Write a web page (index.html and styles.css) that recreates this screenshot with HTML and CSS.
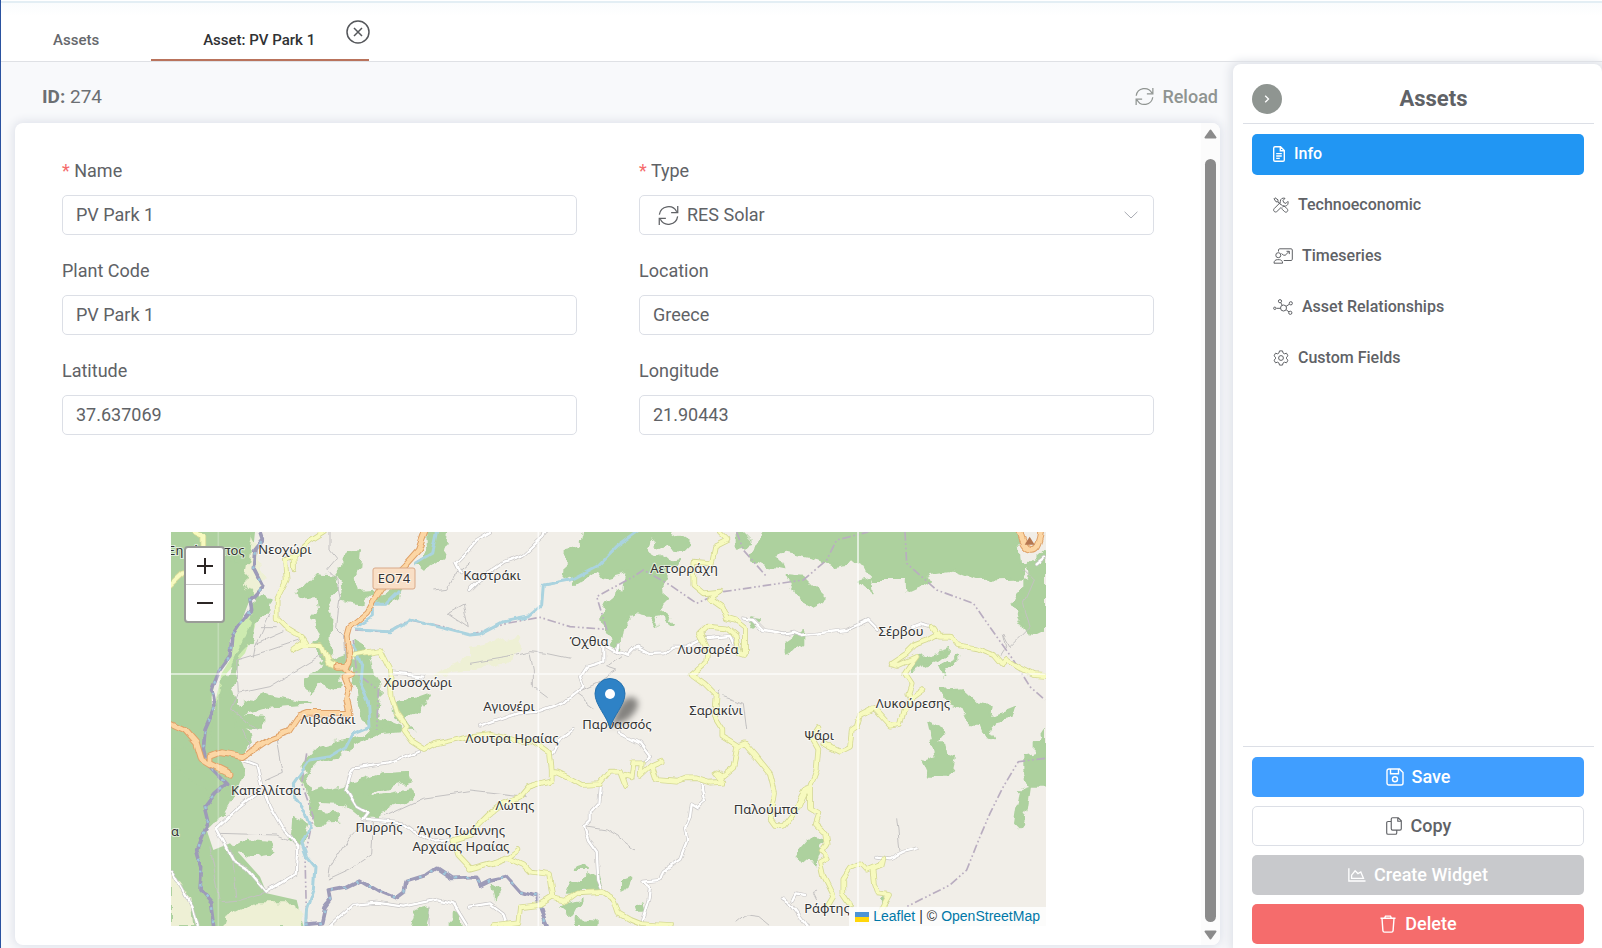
FILE: index.html
```html
<!DOCTYPE html>
<html lang="en">
<head>
<meta charset="utf-8">
<title>Asset: PV Park 1</title>
<link rel="stylesheet" href="styles.css">
</head>
<body>
<svg class="sprite" aria-hidden="true">
  <symbol id="i-refresh" viewBox="0 0 20 20"><path d="M1.300 9.200A8.800 8.800 0 0 1 17.800 6.400M18.800 1v6.200h-6.300M18.700 10.800A8.800 8.800 0 0 1 2.200 13.600M1.200 19v-6.200h6.300"/></symbol>
  <symbol id="i-file" viewBox="0 0 12 16"><path d="M7.500.8H2A1.300 1.300 0 0 0 .7 2v12A1.300 1.300 0 0 0 2 15.300h8a1.300 1.300 0 0 0 1.300-1.300V4.600zM7.300.8v4h4M3.200 7.600h5.600M3.200 10h5.600M3.200 12.400h3.600"/></symbol>
  <symbol id="i-tools" viewBox="0 0 16 16"><path d="M1 1.800 2 .8l3 2v1.700l3.200 3.200M1 1.800l2 3h1.700l3 3M9 10.400c-.4.8-.2 1.500.4 2.100l2 2c.9.9 2 .9 2.800.1s.8-1.900-.1-2.800l-2-2c-.6-.6-1.300-.8-2.100-.5L8.200 7.700M10 8.500l.9.6c1.800.4 4.200-.7 4.300-3.400 0-.5-.1-.9-.3-1.300l-2 2-2.200-.9-.7-2 2-2.200C9.400.5 7.300 2.100 7.300 4.200c0 .5 0 .8.1 1.200L1.200 11.600c-.8.9-.8 2 0 2.800s2 .8 2.800 0L8 10.500"/></symbol>
  <symbol id="i-present" viewBox="0 0 20 16"><path d="M5.500 3.500V2c0-.7.5-1.200 1.200-1.200h11.400c.7 0 1.200.5 1.200 1.200v9.300c0 .7-.5 1.200-1.200 1.200h-7.300M1 15.200h8.600c0-2.300-1.500-3.500-3.300-3.500h-2C2.500 11.700.9 12.900 1 15.200zM8.500 5.500l1.700 1.500 2 .3 4-4M13.500 3.300h2.800v2.800"/><circle cx="5.300" cy="7.200" r="2.500"/></symbol>
  <symbol id="i-nodes" viewBox="0 0 20 16"><circle cx="10.500" cy="9" r="3"/><circle cx="7" cy="2.200" r="1.600"/><circle cx="17.800" cy="4.300" r="1.600"/><circle cx="17.300" cy="13.800" r="1.600"/><circle cx="1.800" cy="9.300" r="1.200"/><path d="m7.800 3.700 1.400 2.600M16.400 5.200 13 7.400M16 12.900l-2.800-2.100M3.500 9.300h3.800"/></symbol>
  <symbol id="i-gear" viewBox="0 0 16 16"><path d="M6.500.9h3l.5 2 1.500.9 2-.6L15 5.800l-1.500 1.400v1.600l1.500 1.400-1.500 2.600-2-.6-1.500.9-.5 2h-3l-.5-2-1.500-.9-2 .6L1 10.200l1.500-1.400V7.200L1 5.800l1.500-2.600 2 .6 1.500-.9z"/><circle cx="8" cy="8" r="2.400"/></symbol>
  <symbol id="i-save" viewBox="0 0 18 18"><path d="M3 1h10.500L17 4.500V15a2 2 0 0 1-2 2H3a2 2 0 0 1-2-2V3a2 2 0 0 1 2-2zM4.500 1v4.800h8V1"/><circle cx="9" cy="11.300" r="2.500"/></symbol>
  <symbol id="i-copy" viewBox="0 0 17 19"><path d="M7 .8h6l3.200 3.200v8.500c0 .8-.6 1.400-1.400 1.400H7c-.8 0-1.400-.6-1.400-1.400V2.200C5.600 1.400 6.200.8 7 .8zM12.500.8v3.700h3.700M5.600 4.800H2.200c-.8 0-1.400.6-1.400 1.400v10.600c0 .8.6 1.400 1.400 1.400H10c.8 0 1.400-.6 1.400-1.400v-2.900"/></symbol>
  <symbol id="i-chart" viewBox="0 0 19 16"><path d="M.9 1v13.300H18.500M3.800 11.500V8.200L7.500 3.500l3 3 3-1.700 2.800 6.700z"/></symbol>
  <symbol id="i-trash" viewBox="0 0 16 18"><path d="M.5 3.200h15M4.600 3l.9-1.900h5l.9 1.900M2 3.200l.9 12.400c.1.900.7 1.500 1.600 1.500h7c.9 0 1.500-.6 1.600-1.500L14 3.200"/></symbol>
</svg>

<header class="tabs">
  <a class="tab" href="#assets">Assets</a>
  <a class="tab tab-active" href="#asset" aria-current="page">Asset: PV Park 1</a>
  <button class="tab-close" aria-label="Close tab"><svg viewBox="0 0 24 24"><circle cx="12" cy="12" r="11"/><path d="m8 8 8 8M16 8l-8 8"/></svg></button>
</header>

<div class="workspace">
  <main class="main">
    <div class="bar">
      <div class="asset-id"><b>ID:</b> 274</div>
      <button class="reload"><svg class="icon"><use href="#i-refresh"/></svg>Reload</button>
    </div>
    <section class="card">
      <div class="scroll-body">
        <form class="form">
          <div class="field"><label for="name"><span class="req">*</span> Name</label><input id="name" value="PV Park 1"></div>
          <div class="field"><label for="type"><span class="req">*</span> Type</label>
            <div class="select-box">
              <svg class="type-icon"><use href="#i-refresh"/></svg>
              <select id="type"><option>RES Solar</option></select>
              <svg class="chevron" viewBox="0 0 14 8"><path d="m.6.8 6.400 6.200L13.400.8"/></svg>
            </div>
          </div>
          <div class="field"><label for="code">Plant Code</label><input id="code" value="PV Park 1"></div>
          <div class="field"><label for="loc">Location</label><input id="loc" value="Greece"></div>
          <div class="field"><label for="lat">Latitude</label><input id="lat" value="37.637069"></div>
          <div class="field"><label for="lon">Longitude</label><input id="lon" value="21.90443"></div>
        </form>
        <div class="map">
          <svg class="map-canvas" viewBox="0 0 875 394" preserveAspectRatio="xMidYMid slice">
            <defs>
              <filter id="scrub" x="0" y="0" width="1" height="1" color-interpolation-filters="sRGB">
                <feTurbulence type="fractalNoise" baseFrequency="0.03" numOctaves="3" seed="4"/>
                <feColorMatrix values="0 0 0 0 0.84  0 0 0 0 0.92  0 0 0 0 0.72  16 0 0 0 -8.6"/>
                <feComposite operator="in" in2="SourceAlpha"/>
              </filter>
              <filter id="scrub2" x="0" y="0" width="1" height="1" color-interpolation-filters="sRGB">
                <feTurbulence type="fractalNoise" baseFrequency="0.014" numOctaves="4" seed="11"/>
                <feColorMatrix values="0 0 0 0 0.65  0 0 0 0 0.87  0 0 0 0 0.59  0 16 0 0 -7"/>
                <feComposite operator="in" in2="SourceAlpha"/>
              </filter>
              <filter id="rough" filterUnits="userSpaceOnUse" x="0" y="0" width="2640" height="1200">
                <feTurbulence type="fractalNoise" baseFrequency="0.03" numOctaves="2" seed="3" result="n"/>
                <feDisplacementMap in="SourceGraphic" in2="n" scale="36" xChannelSelector="R" yChannelSelector="G"/>
              </filter>
              <filter id="wobble" filterUnits="userSpaceOnUse" x="0" y="0" width="2640" height="1200">
                <feTurbulence type="fractalNoise" baseFrequency="0.025" numOctaves="1" seed="7" result="n"/>
                <feDisplacementMap in="SourceGraphic" in2="n" scale="22" xChannelSelector="R" yChannelSelector="G"/>
              </filter>
              <filter id="shade" x="-.5" y="-.5" width="2" height="2"><feGaussianBlur stdDeviation="3"/></filter>
              <path id="west" d="M3 6H255L245 100 270 170 235 220 210 285 180 330 172 400 140 435 125 500 128 600 180 610 225 720 200 780 150 860 110 900 130 960 180 940 270 1040 290 1090 380 1110 400 1188H3z"/>
              <g id="major">
                <path d="M765 6 745 60 705 105 640 170 610 215 590 250 540 290 532 320 538 390 530 412 500 412M530 420 545 432 525 440 540 475 530 510 540 550 410 550 385 560 355 605 300 625 220 680 150 668 120 680 120 700 180 730M3 580 45 600 80 640 95 690 120 705"/>
                <path d="M2550 6Q2560 55 2582 58T2612 6"/>
              </g>
              <g id="minor">
                <path d="M465 6 420 35 370 80 345 90 350 150 320 210 320 265 345 290 395 320 405 335 370 360 400 345 455 345 475 400 500 412M370 80 372 115M540 375 630 360 660 420 665 500 680 550 710 590 700 600 725 635 765 660 800 640 890 620 960 612M70 6 100 20 100 50M3 165 40 130"/>
                <path d="M960 612 1000 620 1030 630 1090 635 1140 670 1145 720 1145 750 1075 770 1050 800 1000 820 960 850 900 910M1145 725 1165 728 1200 745 1235 765 1290 762 1320 725 1350 725 1365 765 1355 735 1385 745 1390 700 1415 700 1412 735 1445 705 1475 692 1445 705 1460 750 1520 755 1545 745 1580 745 1620 758 1660 755 1640 730 1655 740 1690 710 1702 650 1725 640 1760 680 1800 730 1815 790 1802 870 1815 888 1840 888 1870 850 1910 775"/>
                <path d="M1650 6 1675 30 1635 50 1625 100 1570 95 1570 165 1600 190 1650 185 1620 205 1655 230 1670 265 1700 275 1725 295 1725 375 1710 370 1700 320 1670 295 1610 290 1590 310 1610 350 1605 400 1565 435 1600 460 1640 500 1635 560 1660 600 1660 620 1700 645"/>
                <path d="M1045 960 1010 985 1015 980 960 1005 1000 990M900 1016 960 1000 1010 983 1060 1005 1080 1025 1140 1032 1150 1100 1110 1125 1050 1132 1045 1180 970 1188M1150 1105 1190 1112 1220 1090 1300 1086 1330 1105 1345 1150 1380 1170 1410 1182 1500 1188M850 930 865 975 900 1012M900 915 850 930"/>
                <path d="M2285 290 2305 320 2340 320 2360 345 2420 355 2470 375 2495 405 2510 390 2550 415 2590 435 2625 438M2305 312 2270 332 2235 345 2210 370 2165 400 2185 405 2240 380 2225 400 2205 430 2225 460 2215 490 2225 505 2260 480M2225 500 2200 545 2190 585 2160 590 2110 535 2070 555 2060 590 2045 600 2040 650 2010 665 1960 640M1945 590 1925 620 1945 655 1940 720 1920 770 1920 835 1945 850 1935 880 1965 910 1970 940 1955 960 1970 985 1950 995 1960 1040 1990 1100 1975 1125M1915 775 1890 830M2040 1120 2020 1090 2020 1045 2040 1015 2070 1000 2090 1022 2130 1005 2140 985 2135 1010 2110 1020 2115 1060 2125 1090 2160 1095 2130 1150"/>
              </g>
              <g id="local">
                <path d="M1125 6 1120 20 1060 75 1000 95 950 130 900 180M960 6 920 30 900 55M900 60 860 100 875 130M1345 345 1340 365 1375 375 1400 350 1440 372 1485 370 1510 350 1550 350 1600 325 1680 318 1690 340M1345 370 1300 345 1300 395 1250 410 1230 440 1240 470 1180 520 1110 545 1045 550 930 590M670 430 760 440"/>
                <path d="M1720 265 1750 270 1780 300 1840 310 1870 305 1900 315 2030 300 2095 270 2125 300M2230 290 2255 280 2285 290M2625 80 2600 100M1290 762 1285 820 1262 845 1262 870 1242 890 1255 930 1280 965 1285 1050 1300 1085M1595 762 1600 800 1605 815 1585 832 1565 820 1560 860 1545 895 1552 930 1530 985 1480 1020 1470 1050 1420 1055 1440 1070 1435 1110 1415 1175M1415 700 1440 680 1410 640 1350 610M1150 670 1170 630 1210 600"/>
                <path d="M220 690 260 705 275 770 300 830 335 890 385 950 380 1030 290 1085 230 1015 190 990 140 895 210 830 260 790M750 665 660 700 550 715 530 780 560 830 595 850 580 870M590 870 700 880 740 910 790 935 850 930M480 1188 550 1125 620 1118 700 1130 800 1108 850 1120 890 1185M3 1020 45 1095 65 1130 80 1188M900 1130 960 1120 1000 1150 1010 1185M2115 980 2160 985 2200 965 2240 955M1910 1188 1860 1120 1835 1105M1870 1110 1880 1090 1905 1095"/>
              </g>
              <g id="rivers">
                <path d="M270 0 280 30 255 60 250 115 278 170 240 210 245 240 205 290 185 320 180 380 145 430 125 480 135 530 105 600 100 660 110 700 170 760 135 790 105 830 115 870 80 960 95 1010 90 1080 125 1120 135 1195"/>
                <path d="M405 1180 455 1175 465 1130 480 1110 475 1080 530 1070 570 1050 630 1085 680 1105 700 1090 705 1055 770 1035 800 1015 845 1045 920 1042 930 1065 960 1050 1010 1040 1050 1085 1100 1100 1115 1145 1135 1195"/>
              </g>
            </defs>
            <g transform="translate(-1 -2) scale(.333333)">
              <path class="land" d="M0 0h2640v1200H0z"/>
              <use href="#west" class="scrub-base"/>
              <g class="pale" filter="url(#rough)">
                <path d="M245 10 270 90 280 170 255 200 225 160 235 100zM400 1188 380 1120 260 1120 170 1160 160 1188zM3 1020 60 1100 70 1188H3zM900 350 1040 320 1060 355 1000 400 900 420zM830 410 900 385V425L780 440z"/>
              </g>
              <path class="meadow" d="M262 215 215 275 185 320 180 390 155 430 135 520 135 560 170 430 225 370 255 290z"/>
              <g class="wood" filter="url(#rough)">
                <path d="M260 200 305 210 290 250 250 280 245 330 210 370 185 470 195 500 195 560 230 600 240 640 200 680 130 690 110 650 125 580 160 460 200 380 240 290z"/>
                <path d="M100 6H140V70L200 100 160 60V6zM3 640 60 660 120 720 220 720 200 780 150 860 110 900 100 850 120 790 60 740 3 700z"/>
                <path d="M385 190 440 135 490 140 500 170 470 200 485 250 480 370 450 400 530 370 550 400 530 430 510 420 505 480 450 460 415 495 405 450 470 395 430 340 455 320 432 260 450 240 445 200 405 205z"/>
                <path d="M570 60 565 115 545 140 555 190 610 185 560 225 520 215 515 155 495 140 525 105 530 65zM835 0 815 85 760 120 735 100 775 60 770 0zM700 170 690 200 640 220 610 210zM550 330 590 355 605 430 630 470 625 570 700 600 600 610 560 640 600 600 570 530 555 430z"/>
                <path d="M200 530 280 495 420 520 300 530 200 560zM780 490 750 540 700 560 730 600 685 580 670 530zM190 555 280 560V590H200z"/>
                <path d="M680 590 640 600 560 640 500 680 440 690 400 740 420 840 440 880 505 875 500 850 440 845 440 815 520 820 570 860 620 865 640 830 730 800 720 780 620 800 590 790 720 755 715 725 640 730 560 760 420 790 400 700 450 650zM370 860 415 880 400 940 365 930zM190 955 230 930 300 935 310 970 240 980zM725 1195 740 1140 780 1130 770 1195zM845 1145 865 1155 870 1195H845z"/>
                <path d="M1240 0 1230 50 1190 60 1185 130 1215 165 1240 150 1280 120 1300 145 1370 125 1360 180 1310 220 1290 260 1315 300 1330 350 1350 355 1362 290 1395 245 1440 255 1460 285 1450 240 1510 290 1470 230 1490 210 1480 140 1530 85 1480 90 1430 60 1440 30 1480 50 1540 60 1560 40 1500 0z"/>
                <path d="M1790 0 1740 80 1790 105 1840 115 1822 75 1850 65 1960 90 1990 105 2060 95 2090 110 2110 150 2210 150 2212 185 2245 170 2280 150 2270 130 2340 120 2420 150 2590 145 2550 90 2540 0zM1700 0 1740 40 1700 50zM1850 135 1900 140 1970 210 1930 230 1890 210zM2065 150 2100 140 2105 190 2080 170zM2560 120 2625 60V310L2580 320 2560 280 2530 220 2560 170z"/>
                <path d="M1740 265 1770 270 1750 290zM1850 335 1900 300V340L1850 365zM2240 390 2340 360 2310 385 2220 425zM2310 410 2365 380 2320 435zM2315 480 2370 475 2420 520 2465 530 2460 560 2535 530 2525 565 2480 570 2460 600 2475 625 2440 605 2430 580 2390 575 2370 530 2330 515zM2275 575 2325 600 2295 640 2320 640 2325 670 2355 680 2340 740 2280 740 2260 695 2300 680 2290 640z"/>
                <path d="M2625 600 2600 640 2600 670 2560 680 2560 720 2580 770 2570 840 2550 895 2535 880 2550 780 2580 770 2625 770zM1890 960 1920 925 1965 930 1940 1000 1880 990zM1350 1060 1390 1045 1380 1070 1350 1085zM1200 1060 1280 1030 1290 1080 1190 1085zM1170 1130 1235 1110 1210 1160zM1205 1020 1250 1005 1260 1020zM965 1065 985 1070 975 1105zM1220 1170 1280 1175 1280 1188H1220zM1395 1130 1415 1120 1420 1145 1400 1145zM2130 1110 2150 1090 2150 1130z"/>
              </g>
              <use href="#west" filter="url(#scrub2)"/>
              <use href="#west" filter="url(#scrub)"/>
              <g class="track" filter="url(#wobble)">
                <path d="M480 6 480 60 500 85 470 120 500 150 510 200 500 290 520 310 525 390M270 290 320 290M260 340 340 305M200 390 300 360 390 330M300 250 255 350 250 380M200 390 205 490 300 470 460 375M205 490 185 540 260 600M220 600 240 640 220 690M320 620 340 730 285 755M145 910 320 915 355 930M155 1115 210 1110 290 1085M120 950 150 1110M185 960 200 1100M640 860 760 805 900 785M610 875 605 975 540 1020 475 1050 480 1010 540 920 580 880M790 180 830 175 850 140 900 100M835 250 880 225 895 290z"/>
                <path d="M900 400 1020 380 1080 365 1130 370 1200 385M1080 370 1090 420 1090 470 1130 500M1350 380 1310 410 1340 420 1280 460 1215 490 1270 530M1240 890 1310 900 1350 925 1395 960M2560 120 2590 150 2560 220 2580 290 2520 350 2500 310 2510 350 2490 380M2180 865 2190 960M1700 1180 1730 1155 1770 1160 1800 1185M1940 1110 1930 1090 1945 1085M780 1130V1188M900 780 990 790 1070 800M1640 510 1650 480M1660 500 1720 520 1730 600"/>
              </g>
              <g class="boundary">
                <path d="M555 300 650 305 720 270 820 290 900 315 1010 280 1110 262 1200 290 1310 298 1280 200 1390 140 1420 120 1500 165 1580 220 1660 185 1900 150 1970 90 2000 30 2095 6M2205 6 2210 100 2300 180 2410 220 2480 320 2530 390 2580 470 2625 510M1700 6 1720 60 1790 140"/>
                <path d="M550 330 560 430 625 480 620 600M410 670 395 760 430 860 405 980 410 1180M2625 685 2545 695 2500 770 2460 850 2430 920 2390 1020 2340 1065 2210 1130"/>
              </g>
              <g class="stream" filter="url(#wobble)">
                <path d="M800 0 785 70 735 100M690 180 650 220 610 220 610 260 560 290M555 300 660 305 720 270 800 290 900 315 930 312 1000 275 1075 260 1115 225 1120 165 1200 150 1285 105 1340 50 1410 0M548 340 575 410 570 460 595 510 600 590 550 610 530 650 480 680 420 690 370 760 375 810 405 850 420 890 395 940 410 980 435 1010 430 1080 410 1140 405 1195"/>
              </g>
              <g filter="url(#wobble)">
                <use href="#rivers" class="river"/>
                <use href="#rivers" class="river-water"/>
              </g>
              <g filter="url(#wobble)">
                <use href="#local" class="local-case"/>
                <use href="#local" class="local-fill"/>
                <use href="#minor" class="minor-case"/>
                <use href="#minor" class="minor-fill"/>
                <use href="#major" class="major-case"/>
                <use href="#major" class="major-fill"/>
              </g>
              <path class="peak" d="m2564 44 15-24 15 24z"/>
              <path class="seam" d="M0 432H2640M1105 0V1200M2064 0V1200"/>
              <path class="seam faint" d="M145 0V1200"/>
            </g>
            <rect class="shield" x="202" y="36" width="42" height="21" rx="2"/>
            <g class="labels">
              <text x="223" y="51">ΕΟ74</text>
              <text x="35" y="23">Ξηρόκαμπος</text>
              <text x="114" y="22">Νεοχώρι</text>
              <text x="321" y="48">Καστράκι</text>
              <text x="513" y="41">Αετορράχη</text>
              <text x="418" y="114">Όχθια</text>
              <text x="537" y="122">Λυσσαρέα</text>
              <text x="730" y="104">Σέρβου</text>
              <text x="247" y="155">Χρυσοχώρι</text>
              <text x="338" y="179">Αγιονέρι</text>
              <text x="545" y="183">Σαρακίνι</text>
              <text x="742" y="176">Λυκούρεσης</text>
              <text x="157" y="192">Λιβαδάκι</text>
              <text x="446" y="197">Παρνασσός</text>
              <text x="341" y="211">Λουτρα Ηραίας</text>
              <text x="648" y="208">Ψάρι</text>
              <text x="95" y="263">Καπελλίτσα</text>
              <text x="344" y="278">Λώτης</text>
              <text x="595" y="282">Παλούμπα</text>
              <text x="208" y="300">Πυρρής</text>
              <text x="290" y="303">Άγιος Ιωάννης</text>
              <text x="290" y="319">Αρχαίας Ηραίας</text>
              <text x="4" y="304">α</text>
              <text x="656" y="381">Ράφτης</text>
            </g>
            <path class="pin-shadow" filter="url(#shade)" d="M439 195 448 174Q458 160 466 168 470 176 456 188z"/>
            <path class="pin" d="M439 196C436 184 424 173 424 161.500a15 15 0 0 1 30 0C454 173 442 184 439 196z"/>
            <circle class="pin-hole" cx="439" cy="162" r="5"/>
          </svg>
          <div class="zoom-control">
            <button aria-label="Zoom in"><svg viewBox="0 0 16 16"><path d="M0 8h16M8 0v16"/></svg></button>
            <button aria-label="Zoom out"><svg viewBox="0 0 16 16"><path d="M0 8h16"/></svg></button>
          </div>
          <div class="attribution">
            <svg class="flag" viewBox="0 0 14 10"><path fill="#4c94d6" d="M0 0h14v5H0z"/><path fill="#ffd60a" d="M0 5h14v5H0z"/></svg>
            <a href="#leaflet">Leaflet</a> <span>|</span> <span>©</span> <a href="#osm">OpenStreetMap</a>
          </div>
        </div>
      </div>
      <div class="scrollbar" aria-hidden="true">
        <svg class="arrow" viewBox="0 0 13 10"><path d="M6.500 1.500 11.500 8.500h-10z"/></svg>
        <div class="thumb"></div>
        <svg class="arrow" viewBox="0 0 13 10"><path d="M1.500 1.500h10l-5 7z"/></svg>
      </div>
    </section>
  </main>

  <aside class="side">
    <div class="side-head">
      <button class="collapse" aria-label="Collapse panel"><svg viewBox="0 0 6 8"><path d="m1.200.8 3.300 3.200-3.300 3.200"/></svg></button>
      <h2>Assets</h2>
    </div>
    <nav class="nav">
      <a class="active" href="#info"><svg class="n12"><use href="#i-file"/></svg>Info</a>
      <a href="#tech"><svg class="n16"><use href="#i-tools"/></svg>Technoeconomic</a>
      <a href="#time"><svg class="n20"><use href="#i-present"/></svg>Timeseries</a>
      <a href="#rel"><svg class="n20"><use href="#i-nodes"/></svg>Asset Relationships</a>
      <a href="#custom"><svg class="n16"><use href="#i-gear"/></svg>Custom Fields</a>
    </nav>
    <div class="actions">
      <button class="btn save"><svg><use href="#i-save"/></svg>Save</button>
      <button class="btn copy"><svg><use href="#i-copy"/></svg>Copy</button>
      <button class="btn widget" disabled><svg><use href="#i-chart"/></svg>Create Widget</button>
      <button class="btn delete"><svg><use href="#i-trash"/></svg>Delete</button>
    </div>
  </aside>
</div>
</body>
</html>
```
FILE: styles.css
```css
* { box-sizing: border-box; }
body {
  margin: 0;
  height: 100vh;
  display: flex;
  flex-direction: column;
  overflow: hidden;
  border-left: 1px solid #2a52a0;
  background: #f8f9fb;
  color: #606266;
  font: 18px/24px Roboto, "Noto Sans", sans-serif;
}
a { color: inherit; text-decoration: none; }
button, input, select { font: inherit; color: inherit; margin: 0; }
button { cursor: pointer; border: 0; background: none; padding: 0; }
svg { display: block; fill: none; stroke: currentColor; }
.sprite { position: absolute; width: 0; height: 0; }

.tabs {
  height: 62px;
  flex: none;
  display: flex;
  align-items: flex-end;
  background: linear-gradient(#fff 1px, #e3eef4 1px, #e3eef4 3px, #fafcfd 3px, #fff 16px);
  border-bottom: 1px solid #dfe1e5;
  font-size: 15px;
  font-weight: 500;
}
.tab { padding: 0 52px 9px; color: #66686c; }
.tab-active {
  padding: 0 54px 7px 52px;
  color: #303133;
  border-bottom: 2px solid #b9735c;
}
.tab-close { align-self: flex-start; margin: 20px 0 0 -23px; color: #55575b; }
.tab-close svg { width: 24px; height: 24px; stroke-width: 1.5; }

.workspace { flex: 1; min-height: 0; display: flex; gap: 13px; }
.main { flex: 1; min-width: 0; display: flex; flex-direction: column; padding: 0 0 3px 14px; }
.bar { height: 61px; flex: none; display: flex; align-items: center; justify-content: space-between; padding: 8px 2px 0 27px; }
.asset-id { font-size: 19px; color: #6c6f73; }
.asset-id b { font-weight: 700; }
.reload { display: flex; align-items: center; gap: 8px; color: #8f9491; font-weight: 500; }
.reload .icon { width: 19px; height: 19px; stroke-width: 1.3; }

.card {
  flex: 1;
  min-height: 0;
  display: flex;
  background: #fff;
  border-radius: 8px;
  box-shadow: 0 0 10px 2px #dfe2ea;
}
.scroll-body { flex: 1; min-width: 0; padding: 36px 47px 0; }
.form { display: grid; grid-template-columns: 1fr 1fr; gap: 24px 62px; }
.field { display: flex; flex-direction: column; gap: 12px; }
.req { color: #f56c6c; }
.field input, .field select {
  width: 100%;
  height: 40px;
  border: 1px solid #dcdfe6;
  border-radius: 5px;
  background: #fff;
  padding: 0 13px 2px;
  outline: 0;
}
.select-box { display: grid; align-items: center; }
.select-box > * { grid-area: 1 / 1; }
.field select { appearance: none; padding: 0 13px 0 47px; }
.type-icon { z-index: 1; width: 21px; height: 21px; margin-left: 19px; stroke-width: 1.2; pointer-events: none; }
.chevron { z-index: 1; width: 14px; height: 8px; justify-self: end; margin-right: 16px; color: #a8abb2; pointer-events: none; }

.map { position: relative; height: 394px; margin: 97px 108px 0 109px; overflow: hidden; }
.map-canvas { width: 100%; height: 100%; stroke: none; }
.zoom-control {
  position: absolute;
  left: 13px;
  top: 14px;
  border: 2px solid #9a9c98;
  border-radius: 4px;
  background: #fff;
  color: #2c2625;
}
.zoom-control button { display: flex; align-items: center; justify-content: center; width: 37px; height: 36px; }
.zoom-control button + button { border-top: 1px solid #ccc; height: 37px; }
.zoom-control svg { width: 16px; height: 16px; stroke-width: 2; }
.attribution {
  position: absolute;
  right: 0;
  bottom: 0;
  display: flex;
  align-items: center;
  gap: 4px;
  padding: 0 6px;
  background: rgba(255, 255, 255, .8);
  font: 14px/19px "Liberation Sans", Arial, sans-serif;
  color: #333;
}
.attribution a { color: #0078a8; }
.flag { width: 14px; height: 10px; stroke: none; }

.land { fill: #f1eee8; }
.scrub-base { fill: #add19e; }
.pale { fill: #eef0d5; }
.meadow { fill: #cdebb0; }
.wood { fill: #add19e; stroke: #add19e; stroke-width: 6; stroke-linejoin: round; }
.track { fill: none; stroke: #c3c1c1; stroke-width: 3; stroke-linejoin: round; }
.boundary { fill: none; stroke: #b9adc0; stroke-width: 5; stroke-dasharray: 26 8 5 8 5 8; }
.stream { fill: none; stroke: #aad3df; stroke-width: 9; stroke-linejoin: round; }
.river { fill: none; stroke: #9d9bb8; stroke-width: 11; stroke-linejoin: round; }
.river-water { fill: none; stroke: #9fc8dc; stroke-width: 7; stroke-dasharray: 8 32; }
.local-case, .local-fill, .minor-case, .minor-fill, .major-case, .major-fill {
  fill: none;
  stroke-linejoin: round;
  stroke-linecap: round;
}
.local-case { stroke: #c9c7c7; stroke-width: 11; }
.local-fill { stroke: #fff; stroke-width: 7; }
.minor-case { stroke: #d5d996; stroke-width: 17; }
.minor-fill { stroke: #f7fabf; stroke-width: 12; }
.major-case { stroke: #dfa269; stroke-width: 20; }
.major-fill { stroke: #fcd6a4; stroke-width: 14; }
.peak { fill: #b5764f; }
.seam { fill: none; stroke: #fff; stroke-opacity: .75; stroke-width: 5; }
.faint { stroke-opacity: .25; }
.shield { fill: #f9dfc6; stroke: #d9a988; }
.labels {
  font: 13px "Noto Sans", sans-serif;
  text-anchor: middle;
  fill: #333;
  stroke: rgba(255, 255, 255, .6);
  stroke-width: 2px;
  paint-order: stroke;
}
.pin { fill: #2e82c6; stroke: #2470ad; }
.pin-hole { fill: #fff; }
.pin-shadow { fill: #000; fill-opacity: .45; }

.scrollbar { width: 19px; flex: none; display: flex; flex-direction: column; align-items: center; gap: 20px; padding: 6px 0 5px; background: #fcfcfc; border-radius: 0 8px 8px 0; color: #8b8b8b; }
.arrow { width: 13px; height: 10px; fill: currentColor; stroke-linejoin: round; stroke-width: 2; }
.thumb { flex: 1; width: 11px; margin-bottom: -12px; border-radius: 6px; background: #8b8b8b; }

.side {
  width: 369px;
  flex: none;
  display: flex;
  flex-direction: column;
  margin-top: 2px;
  padding: 0 8px 3px 10px;
  background: #fff;
  border-radius: 8px 8px 0 0;
  box-shadow: 0 0 10px 3px #dfe2e8;
}
.side-head { height: 60px; flex: none; display: flex; align-items: center; padding: 10px 9px 0; border-bottom: 1px solid #dcdfe6; }
.side-head h2 { flex: 1; margin: 0; font-size: 22px; font-weight: 700; line-height: 28px; text-align: center; }
.collapse { display: flex; align-items: center; justify-content: center; width: 30px; height: 30px; border-radius: 50%; background: #8f9591; color: #fff; }
.collapse svg { width: 6px; height: 8px; stroke-width: 1.3; }
.nav { flex: 1; display: flex; flex-direction: column; gap: 10px; padding: 10px 10px 0 9px; font-size: 16px; font-weight: 500; }
.nav a { display: flex; align-items: center; gap: 9px; height: 41px; padding: 0 21px 2px; border-radius: 5px; }
.nav .active { background: #2196f3; color: #fff; }
.nav svg { height: 16px; stroke-width: 1; }
.nav .active svg { stroke-width: 1.4; }
.n12 { width: 12px; }
.n16 { width: 16px; }
.n20 { width: 20px; }
.actions { display: flex; flex-direction: column; gap: 9px; padding: 10px 10px 1px 9px; border-top: 1px solid #dcdfe6; }
.btn { display: flex; align-items: center; justify-content: center; gap: 8px; height: 40px; border: 1px solid transparent; border-radius: 5px; color: #fff; font-weight: 500; }
.btn svg { width: 18px; height: 18px; stroke-width: 1.4; }
.save { background: #409eff; }
.copy { background: #fff; border-color: #dcdfe6; color: #606266; }
.copy svg { stroke-width: 1.2; }
.widget { background: #c8c9cc; }
.delete { background: #f56c6c; }
```
